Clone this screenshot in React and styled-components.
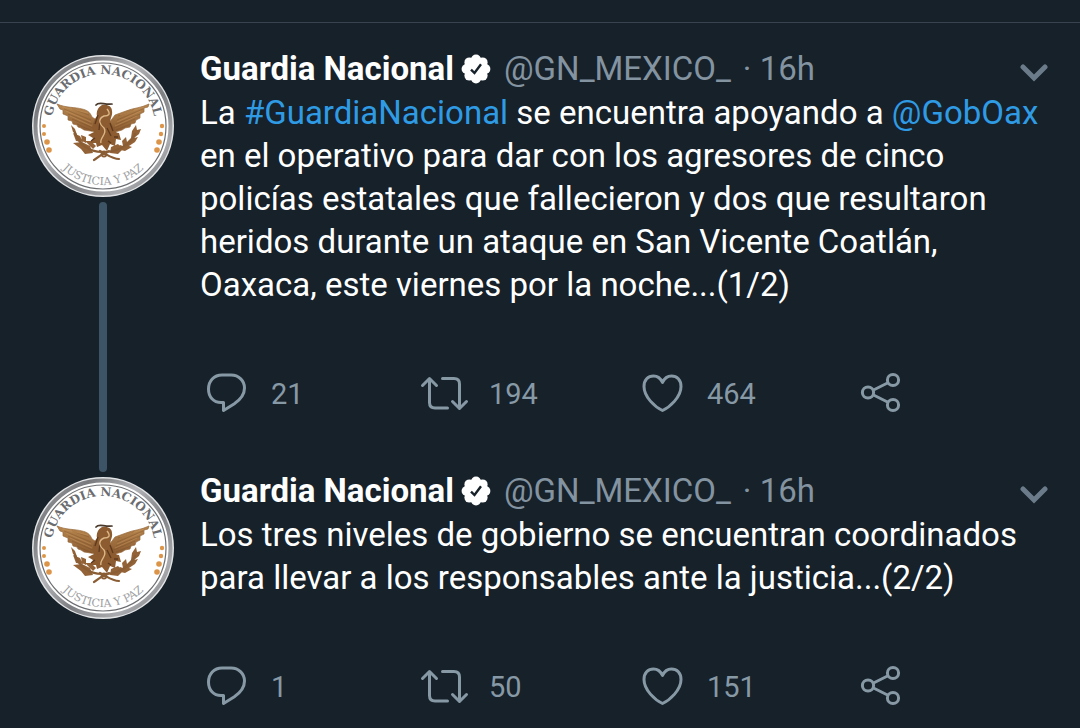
import React, { useId } from "react";
import styled, { createGlobalStyle } from "styled-components";

const tweets = [
  {
    id: 1,
    text: [
      "La ",
      { tag: "#GuardiaNacional" },
      " se encuentra apoyando a ",
      { tag: "@GobOax" },
      " en el operativo para dar con los agresores de cinco policías estatales que fallecieron y dos que resultaron heridos durante un ataque en San Vicente Coatlán, Oaxaca, este viernes por la noche...(1/2)",
    ],
    replies: 21,
    retweets: 194,
    likes: 464,
  },
  {
    id: 2,
    text: [
      "Los tres niveles de gobierno se encuentran coordinados para llevar a los responsables ante la justicia...(2/2)",
    ],
    replies: 1,
    retweets: 50,
    likes: 151,
  },
];

function Seal() {
  const id = useId();

  return (
    <SealSvg viewBox="0 0 142 142" role="img" aria-label="Guardia Nacional">
      <defs>
        <linearGradient id={`${id}-metal`} x1="0" y1="0" x2="1" y2="1">
          <stop offset="0" stopColor="#a9abae" />
          <stop offset="0.2" stopColor="#77797c" />
          <stop offset="0.4" stopColor="#b4b5b8" />
          <stop offset="0.6" stopColor="#7d7f82" />
          <stop offset="0.8" stopColor="#a9abae" />
          <stop offset="1" stopColor="#737578" />
        </linearGradient>
        <linearGradient id={`${id}-bronze`} x1="0" y1="0" x2="0" y2="1">
          <stop offset="0" stopColor="#b98850" />
          <stop offset="1" stopColor="#8a5b31" />
        </linearGradient>
        <path id={`${id}-top`} d="M19 76 A52 52 0 1 1 123 76" transform="translate(0 -5)" />
        <path id={`${id}-bottom`} d="M12 71 A59 59 0 0 0 130 71" />
      </defs>

      <circle cx="71" cy="71" r="71" fill="#e4e5e6" />
      <circle cx="71" cy="71" r="67.5" fill="#fff" stroke={`url(#${id}-metal)`} strokeWidth="4" />
      <circle cx="71" cy="71" r="63" fill="#fff" stroke="#6c6e71" strokeWidth="1.2" />

      <SealTitle>
        <textPath href={`#${id}-top`} startOffset="50%">GUARDIA NACIONAL</textPath>
      </SealTitle>
      <SealMotto>
        <textPath href={`#${id}-bottom`} startOffset="50%">JUSTICIA Y PAZ</textPath>
      </SealMotto>

      <g fill="#dc9548">
        <circle cx="12" cy="71" r="2" />
        <circle cx="12" cy="79" r="2" />
        <circle cx="15" cy="87" r="2.8" />
        <circle cx="17" cy="95" r="2.8" />
        <circle cx="130" cy="71" r="2.2" />
        <circle cx="129" cy="79" r="2.2" />
        <circle cx="127" cy="87" r="2.8" />
        <circle cx="125" cy="95" r="2.8" />
      </g>

      {/* laurel and ribbon */}
      <g fill="#936237">
        <path d="M39 70 L43 74 L45 80 L41 77 Z M41 78 L48 81 L51 87 L44 86 Z M49 80 L54 82 L54 88 L50 86 Z M41 88 L50 87 L58 91 L61 98 L53 99 L49 94 Z M53 86 L59 86 L64 91 L61 94 Z" />
        <path d="M104 70 L105 75 L109 74 L107 79 L102 83 L106 82 L103 87 L97 91 L100 92 L93 96 L84 94 L88 90 L91 91 L90 86 L94 82 L95 87 L99 83 L100 76 Z" />
        <path d="M79 92 L86 89 L91 94 L86 99 L78 98 Z" />
      </g>
      <g fill="none" stroke="#8a5d35" strokeLinecap="round">
        <path d="M43 78 C47 89 57 97 70 97 C85 98 99 89 103 79" strokeWidth="2.2" />
        <path d="M62 105 C66 103 70 98 77 96 M87 104 C80 104 76 100 68 96" strokeWidth="2.2" />
        <circle cx="72" cy="99" r="2.5" strokeWidth="1.8" />
      </g>

      {/* wings */}
      <g fill={`url(#${id}-bronze)`} stroke="#96683b" strokeWidth="0.7" strokeLinejoin="round">
        <path d="M25 49 C34 53 43 52 50 54 C55 55 58 57 60 62 L66 66 L65 77 L52 75 L49 73 L46 72 L45 70 L41 69 L40 66 L36 65 L36 61 L31 59 L31 55 L28 54 Z" />
        <path d="M117 49 C109 53 101 53 94 56 L83 60 L77 68 L78 77 L83 77 L90 75 L93 73 L98 72 L99 69 L103 68 L104 65 L108 63 L108 59 L112 57 L112 53 L116 52 Z" />
      </g>
      <g fill="none" stroke="#70461f" strokeWidth="0.6" opacity="0.5">
        <path d="M32 54 L59 65 M36 59 L60 69 M40 64 L61 73 M45 69 L60 76 M40 54 L57 60" />
        <path d="M111 54 L85 65 M108 59 L84 69 M103 64 L82 73 M99 69 L84 75 M102 55 L86 61" />
      </g>
      <g fill="none" stroke="#d2a066" strokeWidth="0.6" opacity="0.6">
        <path d="M34 56 L59 67 M38 61 L60 71 M30 52 L56 58" />
        <path d="M109 56 L85 67 M105 61 L83 71 M112 52 L88 60" />
      </g>

      {/* body, head and tail */}
      <path
        d="M70 50 C75 49 80 51 80 56 C81 61 77 64 79 69 C84 74 82 78 87 78 L89 85 L84 84 L83 91 L78 89 L75 96 L70 90 L65 92 L64 88 L58 88 L61 83 L56 80 L62 77 C59 71 62 65 65 61 C64 57 66 52 70 50 Z"
        fill="#8c5b30"
      />
      <path d="M64 50 C67 46 72 50 80 49" fill="none" stroke="#49392b" strokeWidth="1.7" strokeLinecap="round" />
      <path
        d="M66 60 L63 69 M78 68 L81 76 M63 83 L59 86 M82 82 L86 82 M76 86 L79 88 M68 66 L67 75 M75 73 L79 81"
        stroke="#5d391d"
        strokeWidth="1.3"
      />
      <path
        d="M75 54 C79 59 77 61 72 61 C65 64 68 70 72 73 C76 79 67 83 69 88"
        fill="none"
        stroke="#dcb786"
        strokeWidth="1.4"
      />
    </SealSvg>
  );
}

function VerifiedIcon() {
  return (
    <Badge viewBox="0 0 30 30" role="img" aria-label="Cuenta verificada">
      <g fill="#fff">
        <circle cx="15" cy="15" r="11" />
        <circle cx="15" cy="5.6" r="5" />
        <circle cx="21.6" cy="8.4" r="5" />
        <circle cx="24.4" cy="15" r="5" />
        <circle cx="21.6" cy="21.6" r="5" />
        <circle cx="15" cy="24.4" r="5" />
        <circle cx="8.4" cy="21.6" r="5" />
        <circle cx="5.6" cy="15" r="5" />
        <circle cx="8.4" cy="8.4" r="5" />
      </g>
      <path d="M10 15.6 L13.5 19 L20 10.3" fill="none" stroke="#16212a" strokeWidth="2.4" />
    </Badge>
  );
}

function ReplyIcon() {
  return (
    <Icon viewBox="0 0 54 44" aria-hidden="true">
      <path d="M22 4 H31 C39 4 44.5 10 44.5 17 C44.5 24 40 29 34 33 L23.5 39.5 V31.5 H21 C13.5 31.5 8.5 26 8.5 18 C8.5 10 14 4 22 4 Z" />
    </Icon>
  );
}

function RetweetIcon() {
  return (
    <Icon viewBox="0 0 54 44" aria-hidden="true">
      <path d="M4.500 14.500 L11.500 7.500 L18.500 14.500 M11.500 8 V31.500 Q11.500 37 17 37 H29.500" />
      <path d="M24.500 7.500 H36 Q41.500 7.500 41.500 13 V36.500 M34.500 30.500 L41.500 37.500 L48.500 30.500" />
    </Icon>
  );
}

function LikeIcon() {
  return (
    <Icon viewBox="0 0 54 44" aria-hidden="true">
      <path d="M26.5 11.5 C24.5 7 21 5 17.5 5 C12 5 8 9 8 15.5 C8 26 19 36 26.5 39.5 C34 36 45 26 45 15.5 C45 9 41 5 35.5 5 C32 5 28.5 7 26.5 11.5 Z" />
    </Icon>
  );
}

function ShareIcon() {
  return (
    <Icon viewBox="0 0 54 44" aria-hidden="true">
      <circle cx="14" cy="21.5" r="5.6" />
      <circle cx="39" cy="9" r="5.6" />
      <circle cx="39" cy="34" r="5.6" />
      <path d="M19.5 19 L33.5 12 M19.5 24 L33.5 31" />
    </Icon>
  );
}

function Tweet({ tweet, connected }) {
  return (
    <TweetContainer>
      <Side>
        <Seal />
        {connected && <Connector />}
      </Side>
      <Body $connected={connected}>
        <Header>
          <Name>Guardia Nacional</Name>
          <VerifiedIcon />
          <Meta>
            <span>@GN_MEXICO_</span>
            <span>· 16h</span>
          </Meta>
          <MenuButton type="button" aria-label="Más opciones">
            <svg width="28" height="18" viewBox="0 0 28 18" aria-hidden="true">
              <path d="M3 3 L14 14 L25 3" />
            </svg>
          </MenuButton>
        </Header>
        <Text>
          {tweet.text.map((el) =>
            el.tag ? (
              <a key={el.tag} href="#tweet">
                {el.tag}
              </a>
            ) : (
              el
            )
          )}
        </Text>
        <Actions>
          <ActionButton type="button" aria-label={`Responder ${tweet.replies}`}>
            <ReplyIcon />
            <Count>{tweet.replies}</Count>
          </ActionButton>
          <ActionButton type="button" aria-label={`Retwittear ${tweet.retweets}`}>
            <RetweetIcon />
            <Count>{tweet.retweets}</Count>
          </ActionButton>
          <ActionButton type="button" aria-label={`Me gusta ${tweet.likes}`}>
            <LikeIcon />
            <Count>{tweet.likes}</Count>
          </ActionButton>
          <ActionButton type="button" aria-label="Compartir">
            <ShareIcon />
          </ActionButton>
        </Actions>
      </Body>
    </TweetContainer>
  );
}

function App() {
  return (
    <>
      <GlobalStyle />
      <TopBar />
      <Thread>
        {tweets.map((tweet, i) => (
          <Tweet key={tweet.id} tweet={tweet} connected={i < tweets.length - 1} />
        ))}
      </Thread>
    </>
  );
}

const GlobalStyle = createGlobalStyle`
  * {
    box-sizing: border-box;
  }

  body {
    margin: 0;
    background: #16212a;
    color: #fff;
    font-family: Roboto, "Liberation Sans", sans-serif;
  }

  button {
    padding: 0;
    border: none;
    background: none;
    color: inherit;
    font: inherit;
    cursor: pointer;
  }
`;

const TopBar = styled.div`
  height: 23px;
  border-bottom: 1px solid #37434e;
`;

const Thread = styled.main`
  padding-top: 27px;
`;

const TweetContainer = styled.article`
  display: flex;
  gap: 26px;
  padding: 0 8px 0 32px;
`;

const Side = styled.div`
  display: flex;
  flex: none;
  flex-direction: column;
  align-items: center;
  width: 142px;
  padding-top: 5px;
`;

const SealSvg = styled.svg`
  display: block;
  flex: none;
  width: 142px;
  height: 142px;
`;

const SealTitle = styled.text`
  fill: #6a6c6f;
  font-family: "DejaVu Serif", serif;
  font-size: 12px;
  font-weight: bold;
  text-anchor: middle;
`;

const SealMotto = styled.text`
  fill: #9b9da0;
  font-family: "DejaVu Serif", serif;
  font-size: 11px;
  text-anchor: middle;
`;

const Connector = styled.div`
  flex: 1;
  width: 8px;
  margin-top: 5px;
  border-radius: 4px;
  background: #3d5466;
`;

const Body = styled.div`
  flex: 1;
  min-width: 0;
  padding-bottom: ${(props) => (props.$connected ? "57px" : "0")};
`;

const Header = styled.div`
  display: flex;
  align-items: center;
  height: 41px;
  padding: 0 24px 4px 0;
  font-size: 33px;
  line-height: 37px;
`;

const Name = styled.span`
  font-weight: bold;
`;

const Badge = styled.svg`
  flex: none;
  width: 30px;
  height: 30px;
  margin: 0 13px 0 7px;
`;

const Meta = styled.span`
  display: flex;
  gap: 12px;
  color: #8493a0;
`;

const MenuButton = styled.button`
  display: flex;
  align-self: flex-end;
  margin-left: auto;
  padding-bottom: 5px;

  path {
    fill: none;
    stroke: #6b7b89;
    stroke-width: 5;
    stroke-linecap: round;
  }
`;

const Text = styled.p`
  margin: 0;
  padding-right: 24px;
  font-size: 33px;
  line-height: 43px;

  a {
    color: #2f9be4;
    text-decoration: none;
  }
`;

const Actions = styled.div`
  display: grid;
  grid-template-columns: repeat(4, 1fr);
  margin-top: 65px;
`;

const ActionButton = styled.button`
  display: flex;
  align-items: center;
  gap: 17px;
  height: 44px;
  color: #8899a6;
  font-size: 29px;
`;

const Count = styled.span`
  padding-top: 2px;
`;

const Icon = styled.svg`
  flex: none;
  width: 54px;
  height: 44px;
  fill: none;
  stroke: currentColor;
  stroke-width: 3;
  stroke-linecap: round;
  stroke-linejoin: round;
`;

export default App;
